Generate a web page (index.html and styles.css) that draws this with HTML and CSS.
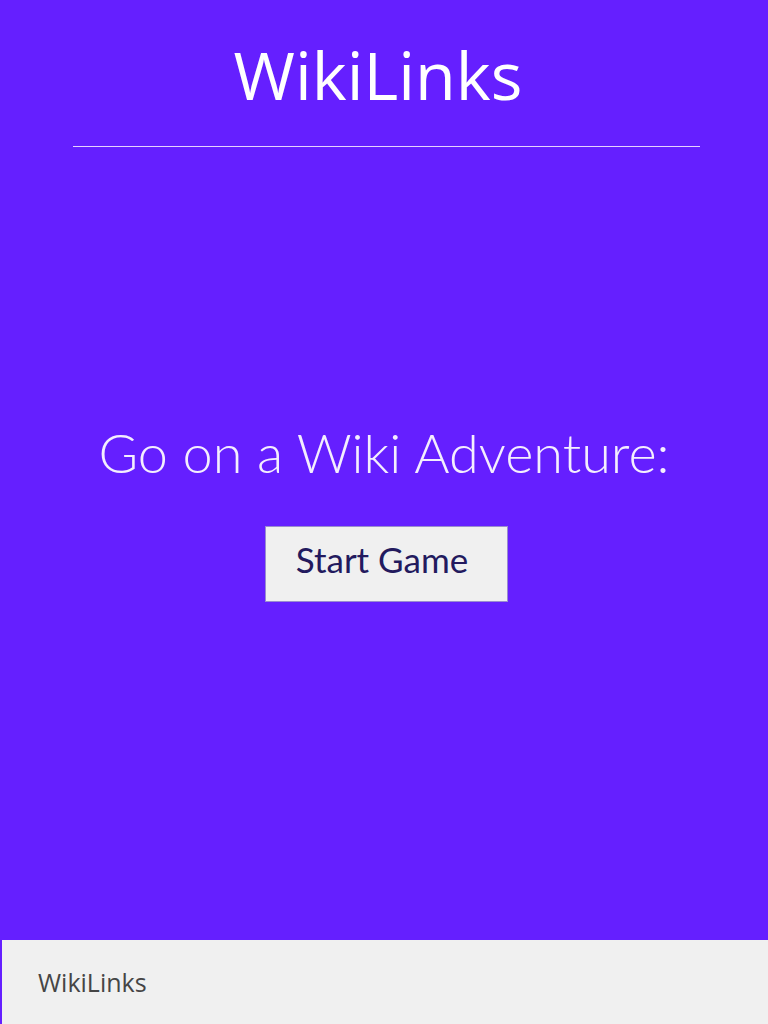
FILE: index.html
```html
<!DOCTYPE html>
<html>
<head>
<meta charset="utf-8">
<link rel="stylesheet" href="styles.css">
</head>
<body>
<div class="page">
  <header class="top">
    <h1 class="title">WikiLinks</h1>
    <hr class="rule">
  </header>
  <main class="main">
    <h2 class="lead">Go on a Wiki Adventure:</h2>
    <button class="start">Start Game</button>
  </main>
  <footer class="foot">
    <span class="foot-text">WikiLinks</span>
  </footer>
</div>
</body>
</html>
```

FILE: styles.css
```css
html, body {
  margin: 0;
  padding: 0;
  height: 100%;
}
body {
  background: #651fff;
}
.page {
  height: 1024px;
  display: flex;
  flex-direction: column;
}
.top {
  display: flex;
  flex-direction: column;
  align-items: center;
  padding-top: 34px;
}
.title {
  margin: 0;
  font-family: "Open Sans", sans-serif;
  font-weight: 400;
  font-size: 66.5px;
  line-height: 80px;
  color: #ffffff;
  transform: translateX(-6px);
}
.rule {
  width: 627px;
  margin: 32px 0 0 5px;
  border: 0;
  height: 1px;
  background: #e6d2ff;
}
.main {
  flex: 1;
  display: flex;
  flex-direction: column;
  align-items: center;
  justify-content: flex-start;
  padding-top: 274px;
}
.lead {
  margin: 0;
  font-family: "Lato", sans-serif;
  font-weight: 300;
  font-size: 54px;
  line-height: 64px;
  color: #f4eefe;
}
.start {
  margin-top: 41px;
  width: 243px;
  height: 76px;
  background: #f0f0f0;
  border: 1px solid #9a8ccf;
  font-family: "Lato", sans-serif;
  font-weight: 400;
  font-size: 35px;
  color: #231a5e;
  padding: 0 8px 10px 0;
  transform: translateX(2px);
}
.foot {
  height: 84px;
  background: #f0f0f0;
  margin-left: 2px;
  display: flex;
  align-items: center;
  padding-left: 36px;
}
.foot-text {
  font-family: "Open Sans", sans-serif;
  font-size: 25px;
  color: #454545;
}
```
